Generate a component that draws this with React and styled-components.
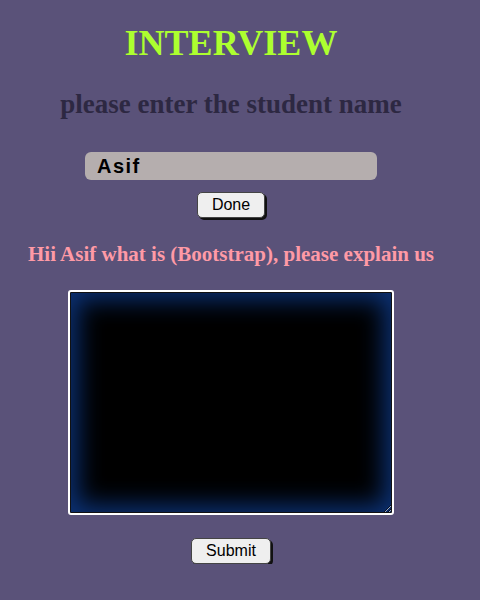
import React, { useState } from 'react'
import styled, { createGlobalStyle } from 'styled-components'

const Global = createGlobalStyle`
  html, body {
    margin: 0;
    background: #5a5279;
  }
  body {
    font-family: "Liberation Serif", "Times New Roman", serif;
  }
`

const Page = styled.div`
  width: 462px;
  display: flex;
  flex-direction: column;
  align-items: center;
`

const Title = styled.h1`
  margin: 21px 0 0;
  font-size: 36px;
  font-weight: bold;
  line-height: 44px;
  color: #adff2f;
`

const Subtitle = styled.h2`
  margin: 23px 0 0;
  font-size: 27px;
  font-weight: bold;
  line-height: 32px;
  color: #2d2842;
`

const NameInput = styled.input`
  box-sizing: border-box;
  margin-top: 32px;
  width: 292px;
  height: 28px;
  padding: 0 12px;
  border: none;
  border-radius: 6px;
  background: #b5aeae;
  font-family: "Liberation Sans", Arial, sans-serif;
  font-size: 20px;
  font-weight: bold;
  letter-spacing: 1.5px;
  color: #000;
  outline: none;
`

const Button = styled.button`
  box-sizing: border-box;
  margin-top: ${p => p.$top}px;
  width: ${p => p.$width}px;
  height: 26px;
  padding: 0;
  border: 1px solid #444;
  border-radius: 5px;
  background: #efefef;
  box-shadow: 2px 2px 0 #111;
  font-family: "Liberation Sans", Arial, sans-serif;
  font-size: 16px;
  color: #000;
`

const Question = styled.p`
  margin: 23px 0 0;
  font-size: 21px;
  font-weight: bold;
  line-height: 26px;
  color: #ff9aa6;
`

const Answer = styled.textarea`
  box-sizing: border-box;
  margin-top: 23px;
  width: 326px;
  height: 225px;
  border: 2px solid #fff;
  border-radius: 3px;
  background: #000;
  box-shadow: inset 0 0 0 1px #111, inset 0 0 24px 8px #0c3276;
  color: #fff;
  outline: none;
`

export default function App() {
  const [name, setName] = useState('Asif')
  return (
    <Page>
      <Global />
      <Title>INTERVIEW</Title>
      <Subtitle>please enter the student name</Subtitle>
      <NameInput value={name} onChange={e => setName(e.target.value)} />
      <Button $top={12} $width={68}>Done</Button>
      <Question>Hii {name} what is (Bootstrap), please explain us</Question>
      <Answer />
      <Button $top={23} $width={80}>Submit</Button>
    </Page>
  )
}
